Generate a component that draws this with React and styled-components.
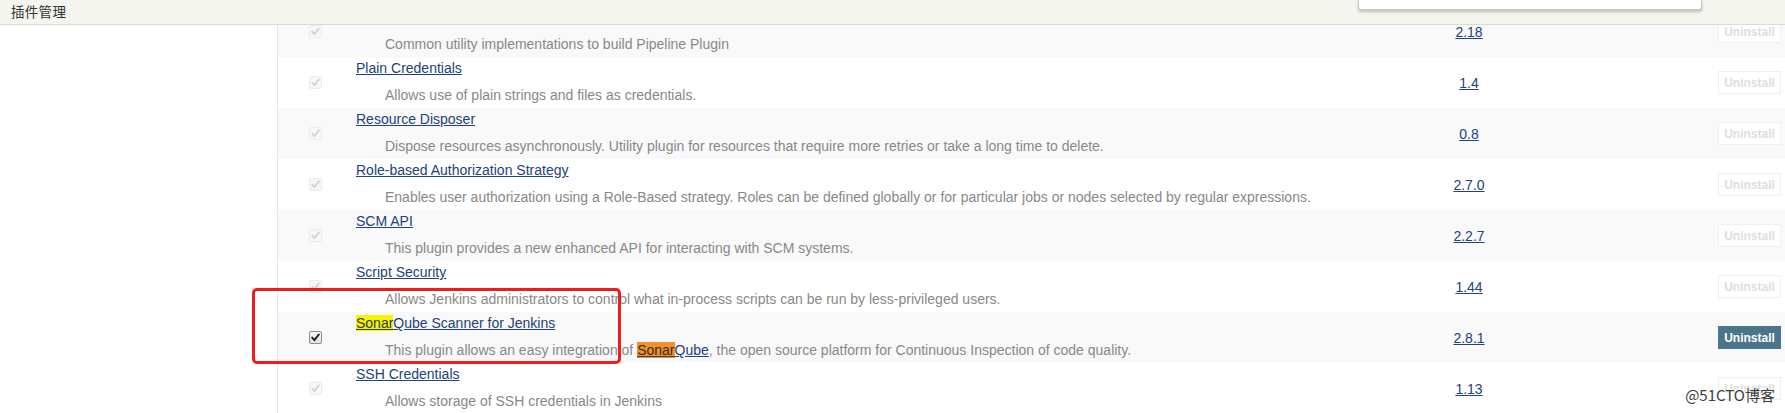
import { useLayoutEffect, useRef } from "react";
import styled, { createGlobalStyle } from "styled-components";

// 插件管理 - installed plugins list (scrolled a little)
const plugins = [
  {
    name: "Pipeline: Supporting APIs",
    desc: "Common utility implementations to build Pipeline Plugin",
    version: "2.18",
  },
  {
    name: "Plain Credentials",
    desc: "Allows use of plain strings and files as credentials.",
    version: "1.4",
  },
  {
    name: "Resource Disposer",
    desc: "Dispose resources asynchronously. Utility plugin for resources that require more retries or take a long time to delete.",
    version: "0.8",
  },
  {
    name: "Role-based Authorization Strategy",
    desc: "Enables user authorization using a Role-Based strategy. Roles can be defined globally or for particular jobs or nodes selected by regular expressions.",
    version: "2.7.0",
  },
  {
    name: "SCM API",
    desc: "This plugin provides a new enhanced API for interacting with SCM systems.",
    version: "2.2.7",
  },
  {
    name: "Script Security",
    desc: "Allows Jenkins administrators to control what in-process scripts can be run by less-privileged users.",
    version: "1.44",
  },
  {
    name: "SonarQube Scanner for Jenkins",
    sonar: true,
    version: "2.8.1",
    active: true,
  },
  {
    name: "SSH Credentials",
    desc: "Allows storage of SSH credentials in Jenkins",
    version: "1.13",
  },
];

function CheckMark({ active }) {
  return (
    <Check $active={active}>
      <svg width="11" height="11" viewBox="0 0 11 11">
        <path
          d="M2.2 5.6 L4.4 8.2 L8.9 2.4"
          fill="none"
          stroke={active ? "#222" : "#d4d4d4"}
          strokeWidth="1.9"
          strokeLinecap="round"
          strokeLinejoin="round"
        />
      </svg>
    </Check>
  );
}

function App() {
  const viewRef = useRef(null);

  // the list is scrolled down a bit under the header
  useLayoutEffect(() => {
    if (viewRef.current) viewRef.current.scrollTop = 19;
  }, []);

  return (
    <Page>
      <GlobalStyle />
      <TopBar>
        <Crumb>插件管理</Crumb>
        <DropPanel />
      </TopBar>
      <Viewport ref={viewRef}>
        <Layout>
          <SidePanel />
          <PluginTable>
            {plugins.map((p, i) => (
              <Row key={p.name} $striped={i % 2 === 0}>
                <CheckCell>
                  <CheckMark active={p.active} />
                </CheckCell>
                <Info>
                  <NameLink href="#">
                    {p.sonar ? (
                      <>
                        <Mark $tone="yellow">Sonar</Mark>Qube Scanner for Jenkins
                      </>
                    ) : (
                      p.name
                    )}
                  </NameLink>
                  <Desc>
                    {p.sonar ? (
                      <>
                        This plugin allows an easy integration of{" "}
                        <DescLink href="#">
                          <Mark $tone="orange">Sonar</Mark>Qube
                        </DescLink>
                        , the open source platform for Continuous Inspection of
                        code quality.
                      </>
                    ) : (
                      p.desc
                    )}
                  </Desc>
                </Info>
                <VersionCell>
                  <VersionLink href="#">{p.version}</VersionLink>
                </VersionCell>
                <ActionCell>
                  <UninstallButton $active={p.active}>Uninstall</UninstallButton>
                </ActionCell>
              </Row>
            ))}
          </PluginTable>
        </Layout>
      </Viewport>
      <Callout />
      <Watermark>@51CTO博客</Watermark>
    </Page>
  );
}

export default App;

const GlobalStyle = createGlobalStyle`
  html, body {
    margin: 0;
    padding: 0;
    background: #fff;
  }
  body {
    font-family: "Liberation Sans", Arial, sans-serif;
    overflow: hidden;
  }
`;

const Page = styled.div`
  position: relative;
  width: 100vw;
  height: 100vh;
  overflow: hidden;
`;

const TopBar = styled.div`
  position: relative;
  z-index: 2;
  height: 25px;
  display: flex;
  align-items: center;
  padding: 0 0 2px 11px;
  box-sizing: border-box;
  background: #f5f5ef;
  border-bottom: 1px solid #dcdcd6;
`;

const Crumb = styled.span`
  font-family: "Noto Sans CJK SC", "Liberation Sans", sans-serif;
  font-size: 13.5px;
  color: #333;
  letter-spacing: 0.3px;
`;

const DropPanel = styled.div`
  position: absolute;
  top: 0;
  right: 83px;
  width: 342px;
  height: 9px;
  background: #fff;
  border: 1px solid #c8c8c8;
  border-top: none;
  border-radius: 0 0 3px 3px;
  box-shadow: 0 2px 3px rgba(0, 0, 0, 0.22);
`;

const Viewport = styled.div`
  height: calc(100vh - 25px);
  overflow: hidden;
`;

const Layout = styled.div`
  display: flex;
`;

const SidePanel = styled.div`
  width: 277px;
  flex-shrink: 0;
`;

const PluginTable = styled.div`
  flex: 1;
  border-left: 1px solid #e6e6e6;
`;

const Row = styled.div`
  display: grid;
  grid-template-columns: 72px 1fr 120px 256px;
  height: 51px;
  align-items: center;
  background: ${(props) => (props.$striped ? "#f9f9f9" : "#fff")};
`;

const CheckCell = styled.div`
  display: flex;
  justify-content: center;
  padding-left: 2px;
`;

const Check = styled.span`
  width: 13px;
  height: 13px;
  box-sizing: border-box;
  display: flex;
  align-items: center;
  justify-content: center;
  border: 1px solid ${(props) => (props.$active ? "#8f8f8f" : "#ececec")};
  border-radius: 2px;
  background: ${(props) =>
    props.$active ? "linear-gradient(#fafafa, #dedede)" : "#f7f7f7"};
`;

const Info = styled.div`
  align-self: stretch;
  display: flex;
  flex-direction: column;
  align-items: flex-start;
  padding: 3px 0 0 6px;
`;

const NameLink = styled.a`
  font-size: 14px;
  line-height: 16px;
  color: #21427a;
  text-decoration: underline;
  white-space: nowrap;
`;

const Mark = styled.span`
  background: ${(props) => (props.$tone === "orange" ? "#f0902e" : "#f5f500")};
  color: ${(props) => (props.$tone === "orange" ? "#3a2a10" : "#2a3a40")};
`;

const Desc = styled.div`
  margin-top: 11px;
  padding-left: 29px;
  font-size: 14px;
  line-height: 16px;
  color: #888;
  white-space: nowrap;
`;

const DescLink = styled.a`
  color: #21427a;
  text-decoration: underline;
`;

const VersionCell = styled.div`
  display: flex;
  justify-content: center;
`;

const VersionLink = styled.a`
  font-size: 14px;
  color: #21427a;
  text-decoration: underline;
`;

const ActionCell = styled.div`
  display: flex;
  justify-content: flex-end;
  padding-right: 4px;
`;

const UninstallButton = styled.button`
  width: 63px;
  height: 23px;
  padding: 0;
  font-family: "Liberation Sans", Arial, sans-serif;
  font-size: 12px;
  font-weight: bold;
  border-radius: 0;
  border: 1px solid ${(props) => (props.$active ? "#4b758b" : "#f0f0f0")};
  background: ${(props) => (props.$active ? "#4b758b" : "#fff")};
  color: ${(props) => (props.$active ? "#fff" : "#dedede")};
`;

const Callout = styled.div`
  position: absolute;
  left: 252px;
  top: 288px;
  width: 369px;
  height: 76px;
  box-sizing: border-box;
  border: 3px solid #f01c1c;
  border-radius: 5px;
  pointer-events: none;
`;

const Watermark = styled.div`
  position: absolute;
  right: 10px;
  bottom: 8px;
  font-family: "Noto Sans CJK SC", "Liberation Sans", sans-serif;
  font-size: 15px;
  color: #3c3c3c;
  text-shadow: 0 0 2px #fff, 0 0 2px #fff;
`;
